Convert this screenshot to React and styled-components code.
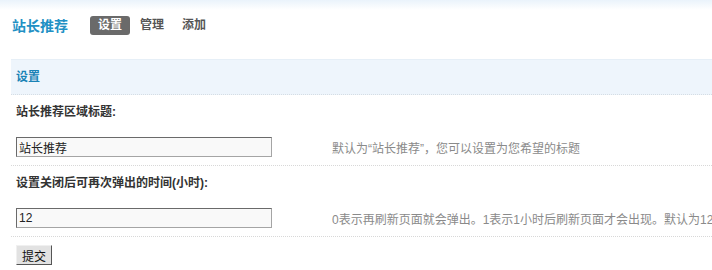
import styled, { createGlobalStyle } from "styled-components";

const Global = createGlobalStyle`
  body {
    margin: 0;
    background: #fff;
    font-family: "Liberation Sans", "Noto Sans CJK SC", sans-serif;
    font-size: 12px;
    color: #333;
    overflow: hidden;
  }
`;

const Header = styled.div`
  display: flex;
  align-items: center;
  height: 50px;
  padding-left: 12px;
  background: linear-gradient(#eaf3fb, #fff 10px);
`;

const Title = styled.h1`
  margin: 0 22px 0 0;
  font-size: 14px;
  font-weight: bold;
  color: #2190c4;
`;

const Tab = styled.a`
  display: inline-block;
  height: 19px;
  line-height: 19px;
  padding: 0 ${(p) => (p.$active ? "8px" : "0")};
  margin-right: ${(p) => (p.$active ? "10px" : "18px")};
  border-radius: 3px;
  font-weight: bold;
  color: ${(p) => (p.$active ? "#fff" : "#555")};
  background: ${(p) => (p.$active ? "#6a6a6a" : "transparent")};
`;

const Panel = styled.div`
  margin: 9px 0 0 11px;
`;

const SectionHead = styled.div`
  height: 34px;
  line-height: 34px;
  padding-left: 5px;
  background: #eef5fc;
  border-top: 1px solid #e6eff7;
  border-bottom: 1px dotted #d5dde4;
  font-weight: bold;
  color: #1a83b6;
`;

const Label = styled.div`
  height: 35px;
  line-height: 35px;
  padding-left: 5px;
  font-weight: bold;
  color: #333;
`;

const FieldRow = styled.div`
  display: flex;
  align-items: center;
  padding: 7px 0 8px 5px;
  border-bottom: 1px dotted #d8d8d8;
  white-space: nowrap;
  overflow: hidden;
`;

const Input = styled.input`
  box-sizing: border-box;
  width: 256px;
  height: 20px;
  margin: 0 60px 0 0;
  padding: 0 2px;
  border: 1px solid #a5a5a5;
  border-top-color: #6a6a6a;
  border-left-color: #6a6a6a;
  background: #f9f9f9;
  font-family: "Liberation Sans", "Noto Sans CJK SC", sans-serif;
  font-size: 12px;
  color: #222;
  flex-shrink: 0;
`;

const Tip = styled.span`
  color: #8a8a8a;
  padding-top: 1px;
`;

const Actions = styled.div`
  padding: 8px 0 0 5px;
`;

const Submit = styled.button`
  height: 20px;
  padding: 0 5px;
  border: 1px solid;
  border-color: #f0f0f0 #555 #555 #f0f0f0;
  background: #e2e2e2;
  font-family: "Liberation Sans", "Noto Sans CJK SC", sans-serif;
  font-size: 12px;
  color: #111;
`;

export default function App() {
  return (
    <>
      <Global />
      <Header>
        <Title>站长推荐</Title>
        <Tab $active>设置</Tab>
        <Tab>管理</Tab>
        <Tab>添加</Tab>
      </Header>
      <Panel>
        <SectionHead>设置</SectionHead>
        <Label>站长推荐区域标题:</Label>
        <FieldRow>
          <Input defaultValue="站长推荐" />
          <Tip>默认为“站长推荐”，您可以设置为您希望的标题</Tip>
        </FieldRow>
        <Label>设置关闭后可再次弹出的时间(小时):</Label>
        <FieldRow>
          <Input defaultValue="12" />
          <Tip>0表示再刷新页面就会弹出。1表示1小时后刷新页面才会出现。默认为12小时</Tip>
        </FieldRow>
        <Actions>
          <Submit>提交</Submit>
        </Actions>
      </Panel>
    </>
  );
}
